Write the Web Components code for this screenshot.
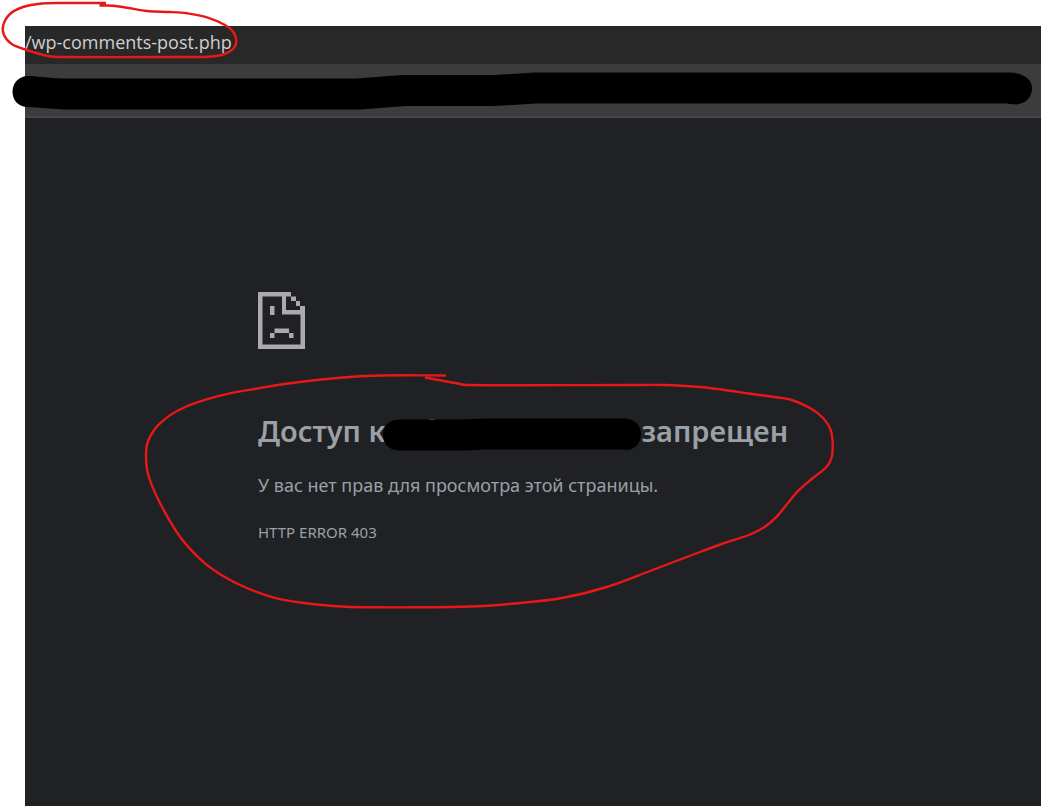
<!DOCTYPE html>
<html lang="ru">
<head>
<meta charset="utf-8">
<meta name="viewport" content="width=device-width, initial-scale=1">
<title>Доступ запрещен</title>
<style>
html, body { margin: 0; background: #fff; }
body { font-family: "Noto Sans", "Open Sans", sans-serif; }
</style>
</head>
<body>
<browser-window>
  <title-bar slot="bar">/wp-comments-post.php</title-bar>
  <tool-bar slot="bar"></tool-bar>
  <error-page>
    <sad-page slot="icon"></sad-page>
    <span slot="before">Доступ к</span>
    <span slot="after">запрещен</span>
    <span slot="message">У вас нет прав для просмотра этой страницы.</span>
    <span slot="code">HTTP ERROR 403</span>
  </error-page>
</browser-window>
<script>
function define(name, html) {
  customElements.define(name, class extends HTMLElement {
    constructor() {
      super();
      this.attachShadow({ mode: "open" }).innerHTML = html;
    }
  });
}

// Smooth pen stroke through a list of points.
function stroke(text) {
  const p = text.trim().split(/\s+/).map(s => s.split(",").map(Number));
  let d = "M" + p[0];
  for (let i = 0; i < p.length - 1; i++) {
    const a = p[i - 1] || p[i], b = p[i], c = p[i + 1], e = p[i + 2] || c;
    const len = Math.hypot(c[0] - b[0], c[1] - b[1]);
    const lead = (u, v, sign) => {
      const dx = v[0] - u[0], dy = v[1] - u[1], k = sign * len / 3 / (Math.hypot(dx, dy) || 1);
      return [dx * k, dy * k];
    };
    const o = lead(a, c, 1), n = lead(b, e, -1);
    d += "C" + [b[0] + o[0], b[1] + o[1], c[0] + n[0], c[1] + n[1], c[0], c[1]].map(v => v.toFixed(1)).join(" ");
  }
  return d;
}

define("browser-window", `
<style>
:host { display: flex; flex-direction: column; box-sizing: border-box; min-height: 100vh; padding: 26px 0 0 25px; overflow: hidden; }
main { flex: 1; background: #202124; }
</style>
<header><slot name="bar"></slot></header>
<main><slot></slot></main>`);

define("title-bar", `
<style>
:host { display: block; position: relative; background: #282828; color: #cfcfcf; font-family: "Open Sans", "Noto Sans", sans-serif; font-size: 18px; line-height: 32px; height: 38px; z-index: 1; }
p { margin: 0; }
svg { position: absolute; left: -25px; top: -26px; width: 250px; height: 64px; overflow: visible; }
path { fill: none; stroke: #e81818; stroke-width: 2.4; }
</style>
<p><slot></slot></p>
<svg viewBox="0 0 250 64" aria-hidden="true"><path d="${stroke("106,3 60,3 42,3.500 23,7 10,14 3.300,25 4,35 11.700,44 26.700,50 48,56 60,57 195,57 208,56.700 223,54.500 233,49 236.300,41.500 233,31.500 225,25 207,17.300 187,13.300 170,12 147,11 127,7.700 113,5.700 99.500,5.500")}"/></svg>`);

define("tool-bar", `
<style>
:host { display: block; position: relative; height: 52px; background: #3c3c3c; border-bottom: 2px solid #474747; }
svg { position: absolute; left: -25px; top: 0; width: calc(100% + 25px); height: 52px; overflow: visible; }
</style>
<svg viewBox="0 0 1041 52" preserveAspectRatio="none" aria-hidden="true"><path d="M28 12C36 12 48 14 64 14.500H356L402 11H494L534 8.500H1010C1023 9 1032 15 1032 24C1032 34 1025 40 1016 40.500L1006 39.500H536L494 42H406L360 45.500H64L28 43C18 43 12.500 36 12.500 27.500S19 12 28 12Z"/></svg>`);

define("sad-page", `
<style>
:host { display: block; width: 47px; height: 57px; }
svg { display: block; }
</style>
<svg width="47" height="57" viewBox="0 0 47 57" fill="#ababab" role="img" aria-label="Ошибка">
<path fill-rule="evenodd" d="M0 0H33V4.500H28V18H42V14H47V57H0ZM4.500 4.500V52.500H42.500V22.500H24V4.500Z"/>
<path d="M33 4.500H38V9H33ZM38 9H42V14H38ZM12 14H16.500V23H12ZM16.500 36.500H31V41H16.500ZM12 41H16.500V46H12ZM31 41H35.500V46H31Z"/>
</svg>`);

define("error-page", `
<style>
:host { display: block; color: #9aa0a6; padding: 174px 24px 48px; }
article { position: relative; max-width: 550px; margin: 0 auto; }
h1 { display: flex; margin: 64px 0 0; font-size: 29px; line-height: 36px; font-weight: 600; white-space: nowrap; }
.mark { width: 258px; margin-left: -2px; height: 38px; overflow: visible; position: relative; }
p { margin: 0; }
.message { margin-top: 20px; font-size: 18px; line-height: 28px; }
.code { margin-top: 22px; font-size: 15px; line-height: 22px; }
.ring { position: absolute; left: -118px; top: 76px; width: 700px; height: 250px; overflow: visible; pointer-events: none; }
.ring path { fill: none; stroke: #e81818; stroke-width: 2.4; }
</style>
<article>
  <slot name="icon"></slot>
  <h1><slot name="before"></slot><svg class="mark" viewBox="0 0 258 38" aria-hidden="true"><path fill="#858a90" d="M46 6H51V9H46Z"/><path d="M16 6.500H80L100 5.500H242C252 6 258 13 258 21C258 30 252 37 243 37L236 36.500H102L84 37.500H16C6 37 0 31 0 22S6 7 16 6.500Z"/></svg><slot name="after"></slot></h1>
  <p class="message"><slot name="message"></slot></p>
  <p class="code"><slot name="code"></slot></p>
  <svg class="ring" viewBox="140 368 700 250" aria-hidden="true"><path d="${stroke("446,375.500 380,375.500 340,377.700 290,383.300 256,388.700 220,395.700 183,408 160,423.300 148.500,440 146,455 148.300,475 160,503 180,536.700 203,561.700 223,576 246.700,588 273,597.300 300,602.500 330,605.700 367,607.300 470,606.500 515,603.500 562,598 605,587.500 650,571 700,552 723,543.500 750,534.500 765,526.700 776.700,516.700 786.700,504.500 798.300,490.700 811.700,479 826.700,466.700 831.500,458 832.700,445 830.700,430 823.300,418.300 810,408 791.700,400 776.700,397.300 750,393.700 723,389.700 700,387 665,385 630,385 467,385 455,383 425,377.500")}"/></svg>
</article>`);
</script>
</body>
</html>
